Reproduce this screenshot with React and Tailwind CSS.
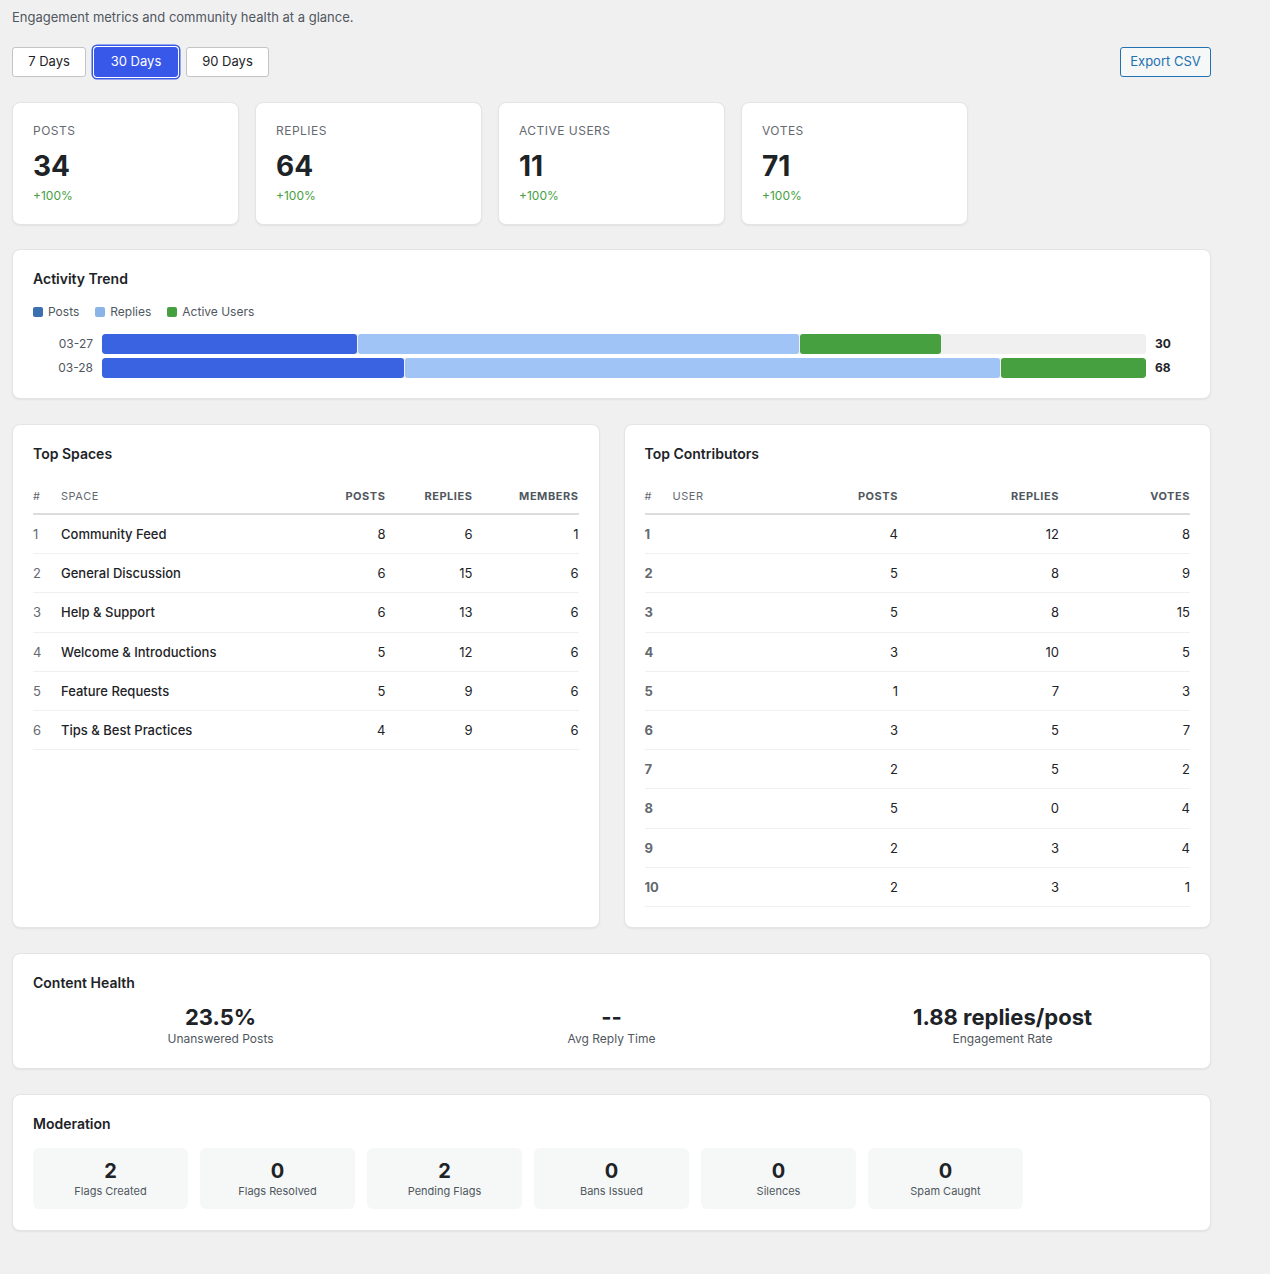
import React from "react";

const font = { fontFamily: "Inter, 'Liberation Sans', sans-serif" };

const stats = [
  { label: "POSTS", value: "34" },
  { label: "REPLIES", value: "64" },
  { label: "ACTIVE USERS", value: "11" },
  { label: "VOTES", value: "71" },
];

const trend = [
  { date: "03-27", p: 24.4, r: 42.3, a: 13.5, total: 30 },
  { date: "03-28", p: 29.0, r: 57.1, a: 13.9, total: 68 },
];

const spaces = [
  ["Community Feed", 8, 6, 1],
  ["General Discussion", 6, 15, 6],
  ["Help & Support", 6, 13, 6],
  ["Welcome & Introductions", 5, 12, 6],
  ["Feature Requests", 5, 9, 6],
  ["Tips & Best Practices", 4, 9, 6],
];

const contributors = [
  [4, 12, 8],
  [5, 8, 9],
  [5, 8, 15],
  [3, 10, 5],
  [1, 7, 3],
  [3, 5, 7],
  [2, 5, 2],
  [5, 0, 4],
  [2, 3, 4],
  [2, 3, 1],
];

const moderation = [
  ["2", "Flags Created"],
  ["0", "Flags Resolved"],
  ["2", "Pending Flags"],
  ["0", "Bans Issued"],
  ["0", "Silences"],
  ["0", "Spam Caught"],
];

function Card({ className = "", children }) {
  return (
    <div
      className={
        "bg-white rounded-[8px] border border-[#e2e4e7] shadow-[0_1px_2px_rgba(0,0,0,0.06)] " +
        className
      }
    >
      {children}
    </div>
  );
}

function Title({ children, className = "" }) {
  return (
    <h2 className={"text-[14px] leading-[18px] font-semibold text-[#1d2327] " + className}>
      {children}
    </h2>
  );
}

export default function App() {
  return (
    <div className="min-h-[1274px] bg-[#f0f0f1] text-[#1d2327]" style={font}>
      <div className="w-[1199px] ml-[12px] pt-[8px] pb-[44px]">
        <p className="text-[13px] leading-[18px] text-[#50575e]">
          Engagement metrics and community health at a glance.
        </p>

        <div className="mt-[21px] flex items-center justify-between">
          <div className="flex items-center gap-[8px]">
            <button className="h-[30px] w-[74px] rounded-[3px] border border-[#c3c4c7] bg-white text-[13px] text-[#1d2327]">
              7 Days
            </button>
            <button className="h-[30px] w-[84px] rounded-[3px] border border-[#3858e9] bg-[#3858e9] text-[13px] text-white shadow-[0_0_0_1px_#ffffff,0_0_0_2.5px_#3858e9]">
              30 Days
            </button>
            <button className="h-[30px] w-[83px] rounded-[3px] border border-[#c3c4c7] bg-white text-[13px] text-[#1d2327]">
              90 Days
            </button>
          </div>
          <button className="h-[30px] w-[91px] rounded-[3px] border border-[#2271b1] bg-[#f6f7f7] text-[13px] text-[#2271b1]">
            Export CSV
          </button>
        </div>

        <div className="mt-[25px] grid grid-cols-5 gap-[16px]">
          {stats.map((s) => (
            <Card key={s.label} className="px-[20px] pt-[20px] pb-[20px]">
              <div className="text-[12px] leading-[16px] tracking-[0.04em] text-[#646970]">
                {s.label}
              </div>
              <div className="mt-[10px] text-[28px] leading-[35px] font-bold text-[#1d2327]">
                {s.value}
              </div>
              <div className="mt-[4px] text-[12px] leading-[16px] text-[#46a040]">+100%</div>
            </Card>
          ))}
        </div>

        <Card className="mt-[24px] p-[20px]">
          <Title>Activity Trend</Title>
          <div className="mt-[16px] flex items-center gap-[16px] text-[12px] leading-[16px] text-[#50575e]">
            <span className="flex items-center gap-[5px]">
              <span className="inline-block w-[10px] h-[10px] rounded-[2px] bg-[#3a6fb0]" />
              Posts
            </span>
            <span className="flex items-center gap-[5px]">
              <span className="inline-block w-[10px] h-[10px] rounded-[2px] bg-[#8ab4e8]" />
              Replies
            </span>
            <span className="flex items-center gap-[5px]">
              <span className="inline-block w-[10px] h-[10px] rounded-[2px] bg-[#46a040]" />
              Active Users
            </span>
          </div>
          <div className="mt-[14px] flex flex-col gap-[4px]">
            {trend.map((t) => (
              <div key={t.date} className="flex items-center gap-[9px]">
                <div className="w-[60px] text-right text-[12px] text-[#50575e]">{t.date}</div>
                <div className="flex-1 h-[20px] rounded-[3px] bg-[#f0f0f0] flex gap-[1px] overflow-hidden">
                  <div className="h-full rounded-[3px] bg-[#3a63e2]" style={{ width: t.p + "%" }} />
                  <div className="h-full rounded-[3px] bg-[#a0c4f5]" style={{ width: t.r + "%" }} />
                  <div className="h-full rounded-[3px] bg-[#46a040]" style={{ width: t.a + "%" }} />
                </div>
                <div className="w-[35px] text-[12px] font-bold text-[#1d2327]">{t.total}</div>
              </div>
            ))}
          </div>
        </Card>

        <div className="mt-[25px] grid grid-cols-2 gap-[24px]">
          <Card className="px-[20px] pt-[20px] pb-[20px]">
            <Title>Top Spaces</Title>
            <table className="mt-[16px] w-full border-collapse text-[13px]">
              <thead>
                <tr className="border-b-2 border-[#dcdcde] text-[11px] leading-[16px] uppercase tracking-[0.05em]">
                  <th className="py-[9px] w-[28px] text-left font-normal text-[#646970]">#</th>
                  <th className="py-[9px] text-left font-normal text-[#646970]">Space</th>
                  <th className="py-[9px] text-right font-bold text-[#50575e]">Posts</th>
                  <th className="py-[9px] w-[87px] text-right font-bold text-[#50575e]">Replies</th>
                  <th className="py-[9px] w-[106px] text-right font-bold text-[#50575e]">Members</th>
                </tr>
              </thead>
              <tbody>
                {spaces.map((r, i) => (
                  <tr key={i} className="border-b border-[#f0f0f1] leading-[16.2px]">
                    <td className="py-[11px] text-[#646970]">{i + 1}</td>
                    <td className="py-[11px] font-medium text-[#1d2327]">{r[0]}</td>
                    <td className="py-[11px] text-right text-[#1d2327]">{r[1]}</td>
                    <td className="py-[11px] text-right text-[#1d2327]">{r[2]}</td>
                    <td className="py-[11px] text-right text-[#1d2327]">{r[3]}</td>
                  </tr>
                ))}
              </tbody>
            </table>
          </Card>

          <Card className="px-[20px] pt-[20px] pb-[20px]">
            <Title>Top Contributors</Title>
            <table className="mt-[16px] w-full border-collapse text-[13px]">
              <thead>
                <tr className="border-b-2 border-[#dcdcde] text-[11px] leading-[16px] uppercase tracking-[0.05em]">
                  <th className="py-[9px] w-[28px] text-left font-normal text-[#646970]">#</th>
                  <th className="py-[9px] text-left font-normal text-[#646970]">User</th>
                  <th className="py-[9px] w-[100px] text-right font-bold text-[#50575e]">Posts</th>
                  <th className="py-[9px] w-[161px] text-right font-bold text-[#50575e]">Replies</th>
                  <th className="py-[9px] w-[131px] text-right font-bold text-[#50575e]">Votes</th>
                </tr>
              </thead>
              <tbody>
                {contributors.map((r, i) => (
                  <tr key={i} className="border-b border-[#f0f0f1] leading-[16.2px]">
                    <td className="py-[11px] font-bold text-[#646970]">{i + 1}</td>
                    <td className="py-[11px]"></td>
                    <td className="py-[11px] text-right text-[#1d2327]">{r[0]}</td>
                    <td className="py-[11px] text-right text-[#1d2327]">{r[1]}</td>
                    <td className="py-[11px] text-right text-[#1d2327]">{r[2]}</td>
                  </tr>
                ))}
              </tbody>
            </table>
          </Card>
        </div>

        <Card className="mt-[25px] px-[20px] pt-[20px] pb-[21px]">
          <Title>Content Health</Title>
          <div className="mt-[11px] grid grid-cols-3 gap-[16px] text-center">
            {[
              ["23.5%", "Unanswered Posts"],
              ["--", "Avg Reply Time"],
              ["1.88 replies/post", "Engagement Rate"],
            ].map(([v, l]) => (
              <div key={l}>
                <div className="text-[22px] leading-[28px] font-bold text-[#1d2327]">{v}</div>
                <div className="text-[12px] leading-[16px] text-[#50575e]">{l}</div>
              </div>
            ))}
          </div>
        </Card>

        <Card className="mt-[25px] px-[20px] pt-[20px] pb-[21px]">
          <Title>Moderation</Title>
          <div className="mt-[15px] grid grid-cols-7 gap-[12px]">
            {moderation.map(([v, l]) => (
              <div key={l} className="h-[61px] rounded-[6px] bg-[#f6f7f7] flex flex-col items-center justify-center">
                <div className="text-[20px] leading-[24px] font-bold text-[#1d2327]">{v}</div>
                <div className="text-[11px] leading-[16px] text-[#50575e]">{l}</div>
              </div>
            ))}
          </div>
        </Card>
      </div>
    </div>
  );
}
